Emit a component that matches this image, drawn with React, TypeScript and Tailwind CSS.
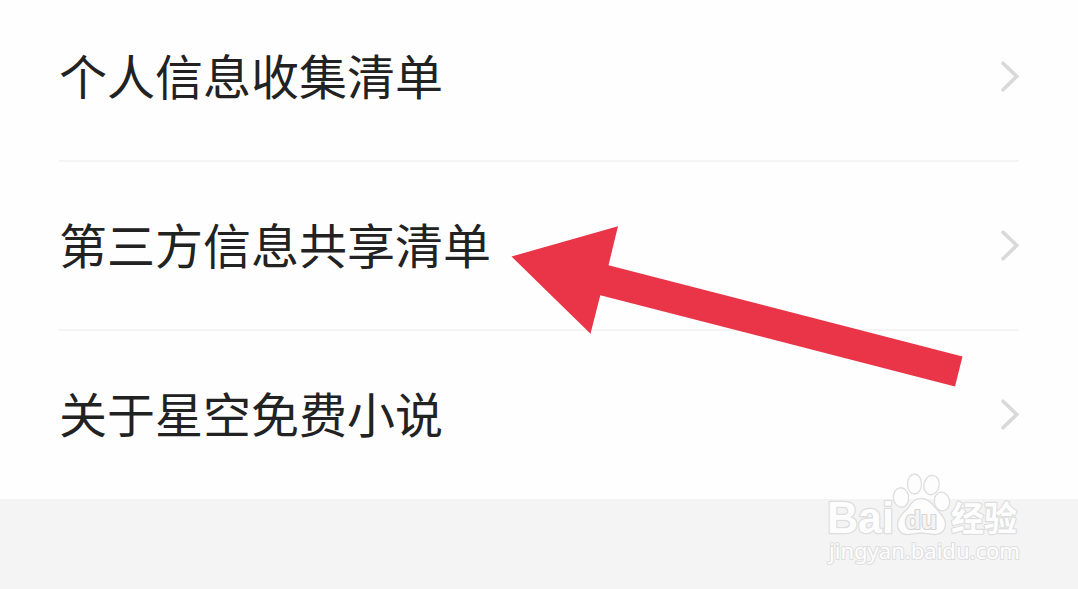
const items = ["个人信息收集清单", "第三方信息共享清单", "关于星空免费小说"];

const ChevronIcon = () => (
  <svg
    className="w-5 h-9"
    viewBox="0 0 20 36"
    fill="none"
    stroke="#d9d9d9"
    strokeWidth="3.6"
    strokeLinecap="round"
    strokeLinejoin="miter"
  >
    <path d="M4 5.2L17.800 18.4L4 31.8" />
  </svg>
);

const Arrow = () => (
  <svg
    className="absolute left-[511px] top-[226px] w-[452px] h-[161px] pointer-events-none"
    viewBox="511 226 452 161"
    fill="#ea3548"
  >
    <path d="M511.5 256.5L618 226.3L608.5 265.3L962.5 356.5L955 386.5L600.3 295.2L590.5 333.7Z" />
  </svg>
);

const Watermark = () => (
  <svg
    className="absolute left-[820px] top-[465px] w-[210px] h-[110px] pointer-events-none"
    viewBox="820 465 210 110"
    fill="#fdfdfd"
    stroke="#dedede"
    strokeWidth="1.3"
    strokeLinejoin="round"
  >
    <ellipse cx="914.5" cy="484" rx="7" ry="10" />
    <ellipse cx="931.5" cy="485" rx="7.6" ry="9.8" transform="rotate(10 931.5 485)" />
    <ellipse cx="901" cy="497.5" rx="7.6" ry="9.8" transform="rotate(-8 901 497.5)" />
    <ellipse cx="942" cy="501.5" rx="7.6" ry="9.4" transform="rotate(-8 942 501.5)" />
    <text
      className="font-['Liberation_Sans',sans-serif] font-bold [paint-order:stroke]"
      x="827"
      y="533"
      fontSize="44"
      textLength="67"
      lengthAdjust="spacingAndGlyphs"
      strokeWidth="2.6"
    >
      Bai
    </text>
    <path d="M921 498.500C928 498.500 932 503 935.500 508C939 513 945.500 516 945.500 524C945.500 531 940 535 934.500 534.500C928 534 925 533 921 533C917 533 914 534.500 909 534.500C901 535 897 530 897.500 524C898 516 904 513 908 508C911.500 503 914 498.500 921 498.500Z" />
    <text
      className="font-['Liberation_Sans',sans-serif] font-bold [paint-order:stroke]"
      x="905"
      y="529"
      fontSize="25"
      textLength="32"
      lengthAdjust="spacingAndGlyphs"
      fill="#f3f3f3"
      stroke="#d4d4d4"
      strokeWidth="2.2"
    >
      du
    </text>
    <text
      className="font-['Noto_Sans_CJK_SC',sans-serif] font-bold [paint-order:stroke]"
      x="951"
      y="531"
      fontSize="34"
      textLength="66"
      lengthAdjust="spacingAndGlyphs"
      strokeWidth="2.4"
    >
      经验
    </text>
    <text
      className="font-['Noto_Sans',sans-serif] [paint-order:stroke]"
      x="829"
      y="559"
      fontSize="21.5"
      textLength="191"
      lengthAdjust="spacingAndGlyphs"
      strokeWidth="2"
    >
      jingyan.baidu.com
    </text>
  </svg>
);

const App = () => {
  return (
    <div className="relative w-[1078px] h-[589px] overflow-hidden bg-[#f4f4f4] font-['Noto_Sans_CJK_SC',sans-serif]">
      <ul className="-mt-[7px] bg-[#fefefe] px-[59px]">
        {items.map((item) => (
          <li
            key={item}
            className="flex h-[169px] items-center justify-between border-b-2 border-[#f4f4f4] pb-0.5 last:h-[168px] last:border-b-0 last:pb-[3px]"
          >
            <span className="mb-1 text-5xl leading-none text-[#222222]">{item}</span>
            <ChevronIcon />
          </li>
        ))}
      </ul>
      <Arrow />
      <Watermark />
    </div>
  );
};

export default App;
